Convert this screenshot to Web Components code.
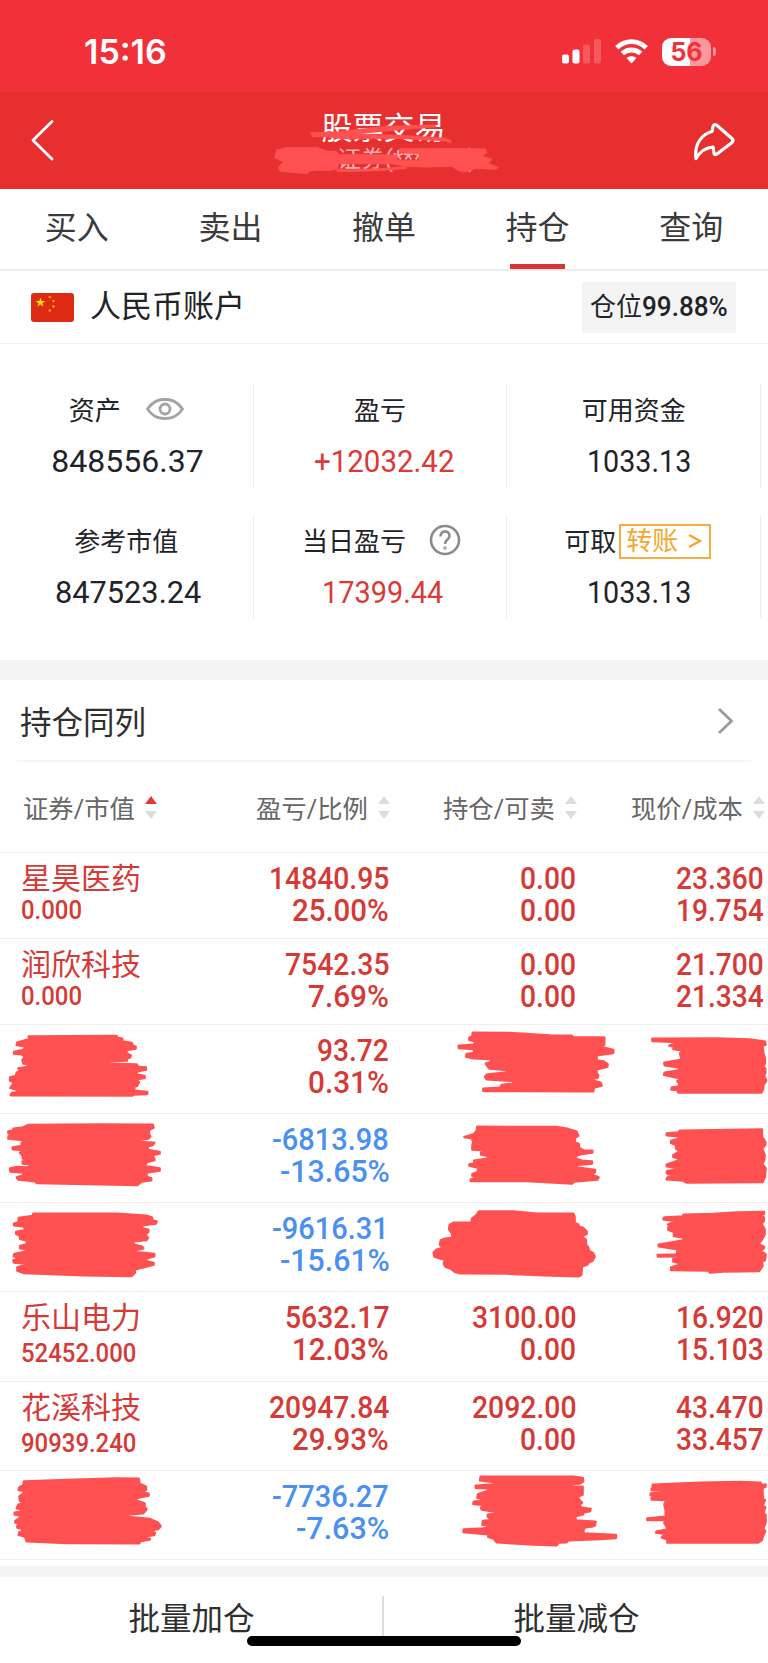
<!DOCTYPE html>
<html lang="zh-CN">
<head>
<meta charset="UTF-8">
<title>股票交易</title>
<style>
    body {
        margin: 0;
        width: 768px;
        height: 1663px;
        overflow: hidden;
        background: #fff;
        color: #1f2429;
        font-family: Roboto, "Noto Sans CJK SC", sans-serif;
    }
</style>
</head>
<body>
<trade-page></trade-page>

<script>
// Texto com largura fixa: estica ou aperta o conteúdo
class FitText extends HTMLElement {
    constructor() {
        super();
        this.attachShadow({ mode: "open" });
        this.shadowRoot.innerHTML = `
            <style>
                :host { display: block; flex: none; white-space: nowrap; }
                span { display: inline-block; transform-origin: left center; }
            </style>
            <span><slot></slot></span>
        `;
    }

    connectedCallback() {
        const w = parseFloat(this.getAttribute("w"));
        const span = this.shadowRoot.querySelector("span");
        this.style.width = w + "px";
        span.style.transform = `scaleX(${w / span.offsetWidth})`;
    }
}
customElements.define("fit-text", FitText);

// Barra de status
class StatusBar extends HTMLElement {
    constructor() {
        super();
        this.attachShadow({ mode: "open" });
        this.shadowRoot.innerHTML = `
            <style>
                :host {
                    display: flex;
                    justify-content: space-between;
                    align-items: center;
                    box-sizing: border-box;
                    height: 92px;
                    padding: 11px 52px 0 84px;
                    background: #f23039;
                    color: #fff;
                    font-family: Inter, sans-serif;
                }
                .time { font-size: 34px; font-weight: 600; }
                .icons { display: flex; align-items: center; gap: 14px; }
                svg { display: block; }
                .battery { display: flex; align-items: center; gap: 2px; }
                .body {
                    width: 49px;
                    height: 28px;
                    border-radius: 9px;
                    background: linear-gradient(90deg, #fff 28px, #fb989c 28px);
                    color: #f23039;
                    font-size: 25px;
                    font-weight: 700;
                    line-height: 28px;
                    text-align: center;
                }
                .nub { width: 3px; height: 9px; border-radius: 0 4px 4px 0; background: #fb989c; }
            </style>
            <fit-text class="time" w="83">15:16</fit-text>
            <div class="icons">
                <svg width="39" height="25" fill="#fff">
                    <rect x="0" y="15.500" width="7" height="9" rx="2"/>
                    <rect x="10.500" y="10.500" width="7" height="14" rx="2"/>
                    <rect x="21" y="5.500" width="7" height="19" rx="2" opacity=".2"/>
                    <rect x="32" y="0" width="7" height="24.500" rx="2" opacity=".2"/>
                </svg>
                <svg width="33" height="25" viewBox="0 0 33 25" fill="none" stroke="#fff" stroke-width="4.800">
                    <path d="M1.800 8.800C10 .500 23 .500 31.200 8.800"/>
                    <path d="M7.300 14.600C12.500 9.800 20.500 9.800 25.700 14.600"/>
                    <path d="M16.500 24.500l-5-5.600c2.900-2.300 7.100-2.300 10 0z" fill="#fff" stroke="none"/>
                </svg>
                <div class="battery"><div class="body">56</div><div class="nub"></div></div>
            </div>
        `;
    }
}
customElements.define("status-bar", StatusBar);

// Cabeçalho com voltar, título e compartilhar
class NavHeader extends HTMLElement {
    constructor() {
        super();
        this.attachShadow({ mode: "open" });
        this.shadowRoot.innerHTML = `
            <style>
                :host {
                    display: flex;
                    justify-content: space-between;
                    box-sizing: border-box;
                    height: 97px;
                    padding: 0 32px 0 30px;
                    background: #e72f2f;
                    color: #fff;
                }
                .icon { margin-top: 27px; }
                .title { position: relative; width: 139px; padding-top: 15px; margin-left: 29px; }
                .main { font-size: 31px; line-height: 44px; text-align: center; margin-left: -10px; }
                .sub { font-size: 23px; line-height: 26px; color: #f9b3b3; margin: -4px 0 0 18px; }
                .ink { position: absolute; left: -60px; top: 8px; }
            </style>
            <svg class="icon" width="26" height="44" fill="none" stroke="#fff" stroke-width="2.800" stroke-linecap="round" stroke-linejoin="round">
                <path d="M22 2.500L3 21.200 22 40"/>
            </svg>
            <div class="title">
                <div class="main">股票交易</div>
                <fit-text class="sub" w="139">证券(***9***)</fit-text>
                <svg class="ink" width="250" height="80" viewBox="0 0 750 240" fill="#ff5151" stroke="#ff5151" stroke-linejoin="round" stroke-linecap="round">
                    <path d="M155 97L230 95 380 78 530 74 530 82 420 90 300 102 420 105 560 113 578 122 574 130 560 124 420 116 250 117 200 111 160 111z"/>
                    <path d="M52 150L80 142 175 142 205 152 232 153 240 163 300 162 415 164 415 181 480 181 480 162 420 157 420 145 620 145 680 146 684 158 670 168 700 176 690 190 718 202 710 209 650 206 620 216 600 214 580 200 500 202 440 200 400 192 300 192 240 192 235 208 210 212 175 212 150 214 145 222 100 218 62 214 58 200 72 186 46 174z"/>
                    <path d="M236 211Q340 214 440 203" fill="none" stroke-width="8"/>
                </svg>
            </div>
            <svg class="icon" width="44" height="44" fill="none" stroke="#fff" stroke-width="3.200" stroke-linejoin="round">
                <path d="M21 7.500Q22 4.500 24.500 6L40 19.500Q42 21.500 40 23.500L25 35Q22 36.500 22 34L21 28C13 29 8 32 4 39.500C2 25 10 15 20 12.500Z"/>
            </svg>
        `;
    }
}
customElements.define("nav-header", NavHeader);

// Abas
class TabBar extends HTMLElement {
    constructor() {
        super();
        this.attachShadow({ mode: "open" });
        const tabs = ["买入", "卖出", "撤单", "持仓", "查询"];
        this.shadowRoot.innerHTML = `
            <style>
                :host {
                    display: flex;
                    box-sizing: border-box;
                    height: 82px;
                    border-bottom: 2px solid #ededed;
                    color: #3b3b3b;
                }
                div {
                    flex: 1;
                    display: flex;
                    flex-direction: column;
                    align-items: center;
                    justify-content: space-between;
                    padding-top: 3px;
                    font-size: 32px;
                    line-height: 72px;
                }
                div.active::after { content: ""; width: 55px; height: 5px; background: #db3434; }
            </style>
            ${tabs.map(t => `<div class="${t === "持仓" ? "active" : ""}"><span>${t}</span></div>`).join("")}
        `;
    }
}
customElements.define("tab-bar", TabBar);

// Linha da conta
class AccountBar extends HTMLElement {
    constructor() {
        super();
        this.attachShadow({ mode: "open" });
        this.shadowRoot.innerHTML = `
            <style>
                :host {
                    display: flex;
                    align-items: center;
                    box-sizing: border-box;
                    height: 73px;
                    padding: 0 32px 0 31px;
                    border-bottom: 1px solid #f2f2f2;
                }
                .name { font-size: 31px; margin-left: 16px; line-height: 44px; }
                .badge {
                    display: flex;
                    align-items: center;
                    justify-content: center;
                    margin-left: auto;
                    width: 154px;
                    height: 51px;
                    background: #f4f4f4;
                    font-size: 26px;
                }
                .badge fit-text { margin-top: -5px; }
                .badge .pct { font-weight: 500; font-size: 27px; margin-top: 0; }
            </style>
            <svg width="43" height="29" viewBox="0 0 43 29">
                <rect width="43" height="29" rx="3" fill="#dd2a12"/>
                <path d="M9.500 4.500l1.200 3.500h3.700l-3 2.200 1.200 3.600-3.100-2.200-3.100 2.200 1.200-3.600-3-2.200h3.700z" fill="#ffde00"/>
                <g fill="#f5a60a">
                    <circle cx="18.800" cy="4" r="1.300"/><circle cx="22.500" cy="8" r="1.300"/>
                    <circle cx="22.500" cy="13.500" r="1.300"/><circle cx="18.800" cy="17.500" r="1.300"/>
                </g>
            </svg>
            <span class="name">人民币账户</span>
            <div class="badge"><fit-text w="52">仓位</fit-text><fit-text class="pct" w="86">99.88%</fit-text></div>
        `;
    }
}
customElements.define("account-bar", AccountBar);

// Célula do resumo: rótulo no slot, valor por atributo
class SummaryCell extends HTMLElement {
    constructor() {
        super();
        this.attachShadow({ mode: "open" });
    }

    connectedCallback() {
        this.shadowRoot.innerHTML = `
            <style>
                :host {
                    display: flex;
                    flex-direction: column;
                    align-items: center;
                    box-sizing: border-box;
                    height: 103px;
                    border-right: 1px solid #ededed;
                }
                .label { display: flex; flex: none; align-items: center; height: 49px; font-size: 26px; }
                .value { font-size: 32px; line-height: 57px; }
                :host([red]) .value { color: #db3a38; }
            </style>
            <div class="label"><slot></slot></div>
            <fit-text class="value" style="margin-left:${this.getAttribute("shift") || 0}px" w="${this.getAttribute("w")}">${this.getAttribute("value")}</fit-text>
        `;
    }
}
customElements.define("summary-cell", SummaryCell);

class AssetSummary extends HTMLElement {
    constructor() {
        super();
        this.attachShadow({ mode: "open" });
        this.shadowRoot.innerHTML = `
            <style>
                :host {
                    display: grid;
                    grid-template-columns: repeat(3, 253.700px);
                    row-gap: 28px;
                    box-sizing: border-box;
                    height: 316px;
                    padding-top: 40px;
                    align-content: start;
                }
                .eye { margin-left: 25px; }
                .help { margin: 0 -3px 0 23px; }
                .transfer {
                    display: flex;
                    align-items: center;
                    justify-content: space-between;
                    box-sizing: border-box;
                    width: 92px;
                    height: 35px;
                    margin: 3px -8px 0 3px;
                    padding: 0 7px 0 5px;
                    border: 2px solid #f7ae3c;
                    color: #f5a62f;
                    line-height: 30px;
                }
                .transfer span { margin-top: -1px; }
            </style>
            <summary-cell value="848556.37" w="152" shift="2">资产
                <svg class="eye" width="38" height="22" fill="none" stroke="#a3a3a3" stroke-width="2.800">
                    <path d="M1.500 11C8 2 14 1.500 19 1.500S30 2 36.500 11C30 20 24 20.500 19 20.500S8 20 1.500 11z"/>
                    <circle cx="19" cy="11" r="5"/>
                </svg>
            </summary-cell>
            <summary-cell value="+12032.42" w="140" shift="7" red>盈亏</summary-cell>
            <summary-cell value="1033.13" w="104" shift="10">可用资金</summary-cell>
            <summary-cell value="847523.24" w="146" shift="3">参考市值</summary-cell>
            <summary-cell value="17399.44" w="121" shift="5" red>当日盈亏
                <svg class="help" width="32" height="32" fill="none" stroke="#8b8b8b" stroke-width="2.600">
                    <circle cx="16" cy="16" r="14"/>
                    <path d="M11.500 12.500C11.500 5.500 20.500 6 20.500 12C20.500 15.500 16 15.500 16 20"/>
                    <circle cx="16" cy="24" r=".500"/>
                </svg>
            </summary-cell>
            <summary-cell value="1033.13" w="104" shift="10">可取<div class="transfer"><span>转账</span>
                <svg width="14" height="16" fill="none" stroke="#f5a62f" stroke-width="2.400"><path d="M1 2L12 8 1 14"/></svg></div>
            </summary-cell>
        `;
    }
}
customElements.define("asset-summary", AssetSummary);

// Cabeçalho de coluna com setas de ordenação
class SortHead extends HTMLElement {
    constructor() {
        super();
        this.attachShadow({ mode: "open" });
        const up = this.hasAttribute("active") ? "#e53935" : "#dcdcdc";
        this.shadowRoot.innerHTML = `
            <style>
                :host { display: flex; align-items: center; gap: 10px; font-size: 25px; color: #666; white-space: nowrap; }
                svg { flex: none; margin-top: 2px; }
            </style>
            <fit-text w="111.500"><slot></slot></fit-text>
            <svg width="12" height="23" fill="#dcdcdc"><path d="M6 0l6 8H0z" fill="${up}"/><path d="M0 15h12l-6 8z"/></svg>
        `;
    }
}
customElements.define("sort-head", SortHead);

// Rabisco vermelho que cobre uma célula; x e y são a origem da célula na página
class InkMask extends HTMLElement {
    constructor() {
        super();
        this.attachShadow({ mode: "open" });
    }

    connectedCallback() {
        const [x, y, ox, oy] = this.getAttribute("at").split(" ").map(Number);
        this.shadowRoot.innerHTML = `
            <style>
                :host { display: block; height: 0; }
                svg { display: block; overflow: visible; }
            </style>
            <svg width="10" height="10" fill="#ff5151" stroke="#ff5151" stroke-width="7" stroke-linejoin="round">
                <path transform="translate(${ox - x} ${oy - y}) scale(.3333)" d="M${this.getAttribute("points")}z"/>
            </svg>
        `;
    }
}
customElements.define("ink-mask", InkMask);

// Contornos dos rabiscos, em terços de pixel
const INK = {
    a1: "86 559L350 558 353 564 367 566 367 574 395 579 399 588 407 590 407 596 380 600 380 610 393 617 389 624 380 626 381 632 330 634 330 641 411 643 414 651 438 652 438 659 412 664 410 674 434 678 434 684 405 688 417 696 411 708 403 709 403 722 442 726 442 732 400 734 397 737 32 736 35 729 50 727 50 719 31 714 42 697 30 692 30 682 48 678 50 668 60 662 55 655 80 651 85 643 70 641 67 630 75 620 65 613 42 611 42 606 70 600 78 590 50 585 52 577 70 573 88 567",
    a2: "218 548L330 549 450 556 515 557 520 562 613 562 613 584 600 590 640 600 640 609 590 616 590 631 610 634 623 643 622 651 590 658 590 670 595 675 593 683 570 690 602 698 605 707 582 713 580 724 250 723 250 716 300 713 305 705 340 701 340 693 260 688 255 680 262 673 320 667 320 660 268 656 257 641 275 635 270 627 220 625 198 620 200 612 224 609 220 597 176 594 176 587 222 584 225 573 208 570 208 563 217 560",
    a3: "757 566L950 565 1050 568 1095 575 1097 584 1088 588 1090 610 1095 625 1095 640 1090 650 1096 656 1096 670 1092 676 1099 692 1090 706 1090 717 1084 728 835 728 832 720 814 719 816 712 835 710 839 700 832 694 840 685 792 675 794 668 835 661 838 653 794 646 793 638 845 629 840 610 850 602 820 597 822 590 808 587 835 576 757 573",
    b1: "84 75L300 73 458 74 461 83 447 90 447 100 451 110 445 116 415 120 415 126 463 128 459 135 442 139 445 150 479 156 479 161 458 165 464 180 440 186 435 198 479 205 479 212 440 218 440 230 454 235 454 241 425 245 412 255 110 249 105 244 55 239 50 232 70 226 70 218 31 215 30 205 50 201 85 202 95 194 68 191 68 184 95 179 68 176 68 168 60 158 70 150 38 148 38 142 65 138 65 128 85 122 25 116 26 108 70 103 25 100 25 94 40 92 40 86 70 82",
    b2: "232 80L470 81 505 87 530 95 535 107 525 113 525 127 537 132 537 143 550 151 577 152 577 158 545 162 530 167 525 175 550 183 576 184 576 191 530 195 530 202 585 210 585 216 575 224 596 232 592 239 522 245 516 251 380 243 212 243 212 239 230 233 217 228 217 222 233 216 235 204 208 197 208 193 225 189 222 182 262 176 265 168 243 164 243 158 250 151 217 149 217 136 220 125 215 115 193 111 222 102 230 92",
    b3: "840 92L1086 88 1086 110 1096 125 1096 135 1087 145 1094 165 1093 180 1087 192 1097 205 1095 230 1088 246 860 248 850 242 800 238 802 232 850 225 805 223 800 218 802 213 845 207 800 199 800 194 825 185 845 179 820 171 820 165 838 155 828 145 828 135 813 129 813 123 835 117 835 109 800 106 800 100 835 97",
    c1: "100 341L350 341 440 347 456 353 458 361 470 364 468 371 427 376 427 385 445 389 445 396 435 404 444 413 440 420 400 424 402 434 427 440 430 445 410 450 390 455 463 462 463 469 440 475 440 484 461 489 461 494 440 500 405 508 405 518 395 528 250 526 70 519 52 512 52 502 75 495 95 492 42 488 40 481 60 474 41 469 43 462 75 455 85 449 60 445 60 438 80 433 80 422 60 417 60 408 48 401 48 396 75 390 72 380 42 376 42 371 56 366 56 354 98 348",
    c2: "237 334L340 334 410 341 520 341 524 350 524 369 535 373 537 381 550 384 560 395 560 402 550 406 520 406 525 412 550 413 558 420 558 433 565 443 568 453 580 460 584 470 578 482 566 487 562 494 546 499 544 525 535 529 430 526 320 521 180 520 165 516 154 507 137 501 131 490 135 480 115 474 103 470 101 458 110 449 128 444 120 434 122 421 135 416 158 413 156 401 147 388 149 374 160 368 214 368 216 356 230 345",
    c3: "850 344L940 342 1010 337 1092 336 1092 343 1070 348 1092 352 1092 362 1085 372 1094 388 1094 404 1085 420 1075 432 1092 440 1092 445 1080 453 1097 463 1095 480 1085 487 1088 497 1078 513 970 515 930 518 925 512 813 510 814 502 835 495 842 490 820 485 820 476 835 469 774 470 773 465 830 463 833 448 776 439 776 434 850 421 850 413 822 408 822 396 805 390 805 382 820 377 804 374 828 363 790 358 793 352 850 349",
    d1: "72 334L200 330 350 325 416 326 418 334 418 341 438 350 438 360 425 367 446 371 446 377 415 383 405 390 434 400 434 410 440 418 430 430 385 434 385 441 450 447 473 457 482 469 475 477 440 483 465 488 463 495 425 500 425 504 450 506 449 509 420 514 418 520 200 519 80 514 75 500 56 495 58 487 75 480 52 473 52 467 65 461 46 458 46 452 60 444 58 436 44 434 44 428 80 422 50 415 55 404 75 399 60 393 58 379 70 370 80 364 56 360 58 352 70 345",
    d2: "242 320L520 320 548 324 550 334 540 341 490 344 520 349 548 350 548 374 535 379 536 387 546 398 538 406 545 413 572 417 570 424 550 427 550 433 527 438 527 451 587 455 585 466 575 470 555 472 550 481 552 490 648 495 648 504 600 507 505 511 500 517 476 518 470 526 400 524 290 517 282 507 265 501 264 493 190 486 191 478 250 475 280 471 247 464 249 453 275 450 263 440 263 435 295 427 245 419 243 412 260 406 220 402 221 395 262 391 232 384 234 372 262 363 270 355 227 354 227 347 285 343 285 337 240 331",
    d3: "758 344L900 338 1020 336 1082 338 1083 345 1097 343 1096 351 1088 354 1088 369 1090 392 1095 390 1088 407 1096 412 1090 430 1097 434 1097 458 1090 475 1096 484 1088 500 1086 510 1075 518 802 518 802 508 785 503 790 497 798 492 768 488 770 484 800 479 800 470 793 460 797 450 742 450 742 445 797 440 797 422 793 402 800 390 755 389 755 384 787 379 752 376 752 370 797 367 797 360 755 361 755 355 790 352 758 349"
};

// Largura de cada caractere nos números da tabela
const ADVANCE = { ".": 7, "-": 12.7, "%": 25 };

// Linha da posição; INK substitui o texto quando a célula está rabiscada
class HoldingRow extends HTMLElement {
    constructor() {
        super();
        this.attachShadow({ mode: "open" });
    }

    pair(lines) {
        return lines.map(t => {
            const w = [...t].reduce((sum, c) => sum + (ADVANCE[c] || 16.2), 0);
            return `<fit-text class="num" w="${w}">${t}</fit-text>`;
        }).join("");
    }

    connectedCallback() {
        const { name, profit, qty, price, ink, y, h, oy } = this.data;
        const mask = (n, x, ox) => `<ink-mask at="${x} ${y + 12} ${ox} ${oy}" points="${INK[ink + n]}"></ink-mask>`;
        this.shadowRoot.innerHTML = `
            <style>
                :host {
                    display: grid;
                    grid-template-columns: 200px 189px 187px 188px;
                    box-sizing: border-box;
                    height: ${h}px;
                    padding-top: 11px;
                    border-top: 1px solid #f0f0f0;
                    color: ${profit[0][0] === "-" ? "#4a90f0" : "#d53a36"};
                }
                .num {
                    height: 31.500px;
                    margin-left: auto;
                    font-size: 31px;
                    font-weight: 500;
                    line-height: 30px;
                }
                .name { padding-left: 21px; }
                .title { font-size: 30px; line-height: 30px; }
                .sub {
                    font-size: 26px;
                    font-weight: 500;
                    line-height: 30px;
                    margin-top: ${h > 86 ? 5 : 1}px;
                    transform: scaleX(.92);
                    transform-origin: left center;
                }
            </style>
            <div class="name">${name ? `<div class="title">${name[0]}</div><div class="sub">${name[1]}</div>` : mask(1, 21, 0)}</div>
            <div>${this.pair(profit)}</div>
            <div>${qty ? this.pair(qty) : mask(2, 389, 400)}</div>
            <div>${price ? this.pair(price) : mask(3, 576, 400)}</div>
        `;
    }
}
customElements.define("holding-row", HoldingRow);

const HOLDINGS = [
    { y: 852, h: 86, name: ["星昊医药", "0.000"], profit: ["14840.95", "25.00%"], qty: ["0.00", "0.00"], price: ["23.360", "19.754"] },
    { y: 938, h: 86, name: ["润欣科技", "0.000"], profit: ["7542.35", "7.69%"], qty: ["0.00", "0.00"], price: ["21.700", "21.334"] },
    { y: 1024, h: 89, ink: "a", oy: 850, profit: ["93.72", "0.31%"] },
    { y: 1113, h: 89, ink: "b", oy: 1100, profit: ["-6813.98", "-13.65%"] },
    { y: 1202, h: 89, ink: "c", oy: 1100, profit: ["-9616.31", "-15.61%"] },
    { y: 1291, h: 90, name: ["乐山电力", "52452.000"], profit: ["5632.17", "12.03%"], qty: ["3100.00", "0.00"], price: ["16.920", "15.103"] },
    { y: 1381, h: 89, name: ["花溪科技", "90939.240"], profit: ["20947.84", "29.93%"], qty: ["2092.00", "0.00"], price: ["43.470", "33.457"] },
    { y: 1470, h: 89, ink: "d", oy: 1370, profit: ["-7736.27", "-7.63%"] }
];

class HoldingTable extends HTMLElement {
    constructor() {
        super();
        this.attachShadow({ mode: "open" });
        this.shadowRoot.innerHTML = `
            <style>
                :host { display: block; height: 886px; }
                .title {
                    display: flex;
                    justify-content: space-between;
                    align-items: center;
                    box-sizing: border-box;
                    height: 82px;
                    margin: 0 17px;
                    padding: 0 17px 0 3px;
                    border-bottom: 2px solid #f6f6f6;
                    color: #2f2f2f;
                    font-size: 31.500px;
                }
                .title svg { margin-top: 1px; }
                .heads {
                    display: grid;
                    grid-template-columns: 233px 187px 188px 140px;
                    align-items: center;
                    height: 90px;
                    padding-left: 23px;
                }
                .heads sort-head { margin-top: -1px; }
                .end { border-top: 1px solid #f0f0f0; }
            </style>
            <div class="title"><span>持仓同列</span>
                <svg width="17" height="28" fill="none" stroke="#9b9b9b" stroke-width="2.800"><path d="M2 2L14.500 14 2 26"/></svg>
            </div>
            <div class="heads">
                <sort-head active>证券/市值</sort-head>
                <sort-head>盈亏/比例</sort-head>
                <sort-head>持仓/可卖</sort-head>
                <sort-head>现价/成本</sort-head>
            </div>
            <div class="rows"></div>
            <div class="end"></div>
        `;
        const rows = this.shadowRoot.querySelector(".rows");
        HOLDINGS.forEach(item => {
            const row = document.createElement("holding-row");
            row.data = item;
            rows.appendChild(row);
        });
    }
}
customElements.define("holding-table", HoldingTable);

// Rodapé com as ações em lote
class BatchBar extends HTMLElement {
    constructor() {
        super();
        this.attachShadow({ mode: "open" });
        this.shadowRoot.innerHTML = `
            <style>
                :host {
                    display: flex;
                    position: relative;
                    height: 86px;
                    font-size: 31.500px;
                    line-height: 86px;
                    text-align: center;
                    color: #2f2f2f;
                }
                div { flex: 1; }
                i { width: 2px; height: 42px; margin: 19px 1px 0 -1px; background: #ddd; }
                b { position: absolute; left: 247px; top: 59px; width: 274px; height: 10px; border-radius: 5px; background: #000; }
            </style>
            <div>批量加仓</div><i></i><div>批量减仓</div><b></b>
        `;
    }
}
customElements.define("batch-bar", BatchBar);

class TradePage extends HTMLElement {
    constructor() {
        super();
        this.attachShadow({ mode: "open" });
        this.shadowRoot.innerHTML = `
            <style>
                :host { display: flex; flex-direction: column; }
                .band { height: 20px; background: #f4f4f4; }
                .band.thin { height: 11px; }
            </style>
            <status-bar></status-bar>
            <nav-header></nav-header>
            <tab-bar></tab-bar>
            <account-bar></account-bar>
            <asset-summary></asset-summary>
            <div class="band"></div>
            <holding-table></holding-table>
            <div class="band thin"></div>
            <batch-bar></batch-bar>
        `;
    }
}
customElements.define("trade-page", TradePage);
</script>
</body>
</html>
